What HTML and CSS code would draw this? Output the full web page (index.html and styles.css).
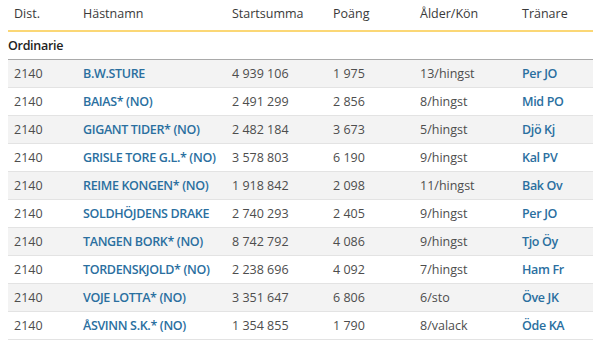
FILE: index.html
```html
<!DOCTYPE html>
<html lang="sv">
<head>
<meta charset="utf-8">
<link rel="stylesheet" href="styles.css">
</head>
<body>
<table class="startlist">
  <colgroup>
    <col class="c-dist"><col class="c-name"><col class="c-sum"><col class="c-pts"><col class="c-age"><col class="c-trainer">
  </colgroup>
  <thead>
    <tr class="head">
      <th>Dist.</th><th>Hästnamn</th><th>Startsumma</th><th>Poäng</th><th>Ålder/Kön</th><th>Tränare</th>
    </tr>
  </thead>
  <tbody>
    <tr class="group"><td colspan="6">Ordinarie</td></tr>
    <tr class="row odd"><td>2140</td><td class="link">B.W.STURE</td><td>4 939 106</td><td>1 975</td><td>13/hingst</td><td class="link">Per JO</td></tr>
    <tr class="row"><td>2140</td><td class="link">BAIAS* (NO)</td><td>2 491 299</td><td>2 856</td><td>8/hingst</td><td class="link">Mid PO</td></tr>
    <tr class="row odd"><td>2140</td><td class="link">GIGANT TIDER* (NO)</td><td>2 482 184</td><td>3 673</td><td>5/hingst</td><td class="link">Djö Kj</td></tr>
    <tr class="row"><td>2140</td><td class="link">GRISLE TORE G.L.* (NO)</td><td>3 578 803</td><td>6 190</td><td>9/hingst</td><td class="link">Kal PV</td></tr>
    <tr class="row odd"><td>2140</td><td class="link">REIME KONGEN* (NO)</td><td>1 918 842</td><td>2 098</td><td>11/hingst</td><td class="link">Bak Ov</td></tr>
    <tr class="row"><td>2140</td><td class="link">SOLDHÖJDENS DRAKE</td><td>2 740 293</td><td>2 405</td><td>9/hingst</td><td class="link">Per JO</td></tr>
    <tr class="row odd"><td>2140</td><td class="link">TANGEN BORK* (NO)</td><td>8 742 792</td><td>4 086</td><td>9/hingst</td><td class="link">Tjo Öy</td></tr>
    <tr class="row"><td>2140</td><td class="link">TORDENSKJOLD* (NO)</td><td>2 238 696</td><td>4 092</td><td>7/hingst</td><td class="link">Ham Fr</td></tr>
    <tr class="row odd"><td>2140</td><td class="link">VOJE LOTTA* (NO)</td><td>3 351 647</td><td>6 806</td><td>6/sto</td><td class="link">Öve JK</td></tr>
    <tr class="row"><td>2140</td><td class="link">ÅSVINN S.K.* (NO)</td><td>1 354 855</td><td>1 790</td><td>8/valack</td><td class="link">Öde KA</td></tr>
  </tbody>
</table>
</body>
</html>
```
FILE: styles.css
```css
html, body {
  margin: 0;
  padding: 0;
  background: #ffffff;
  overflow: hidden;
}
body {
  padding-left: 8px;
  font-family: "Open Sans", "DejaVu Sans", sans-serif;
  font-size: 12.5px;
  color: #4d4d4d;
}
.startlist {
  width: 585px;
  border-collapse: collapse;
  table-layout: fixed;
}
.c-dist { width: 69px; }
.c-name { width: 149px; }
.c-sum { width: 101px; }
.c-pts { width: 87px; }
.c-age { width: 102px; }
.c-trainer { width: 77px; }

.startlist th,
.startlist td {
  padding: 0 0 0 6px;
  text-align: left;
  white-space: nowrap;
  overflow: hidden;
}
.head th {
  height: 27px;
  font-weight: 400;
  color: #3a3a3a;
  border-bottom: 2px solid #fbd775;
  vertical-align: middle;
  padding-bottom: 3px;
}
.group td {
  height: 27px;
  padding-left: 0;
  font-weight: 600;
  letter-spacing: -0.3px;
  color: #222222;
  border-bottom: 1px solid #a9a9a9;
}
.row td {
  height: 27px;
  border-bottom: 1px solid #e3e3e3;
}
.row.odd td {
  background: #f3f3f3;
}
.row td.link {
  color: #2a6f9f;
  font-weight: 600;
  letter-spacing: -0.35px;
}
```
